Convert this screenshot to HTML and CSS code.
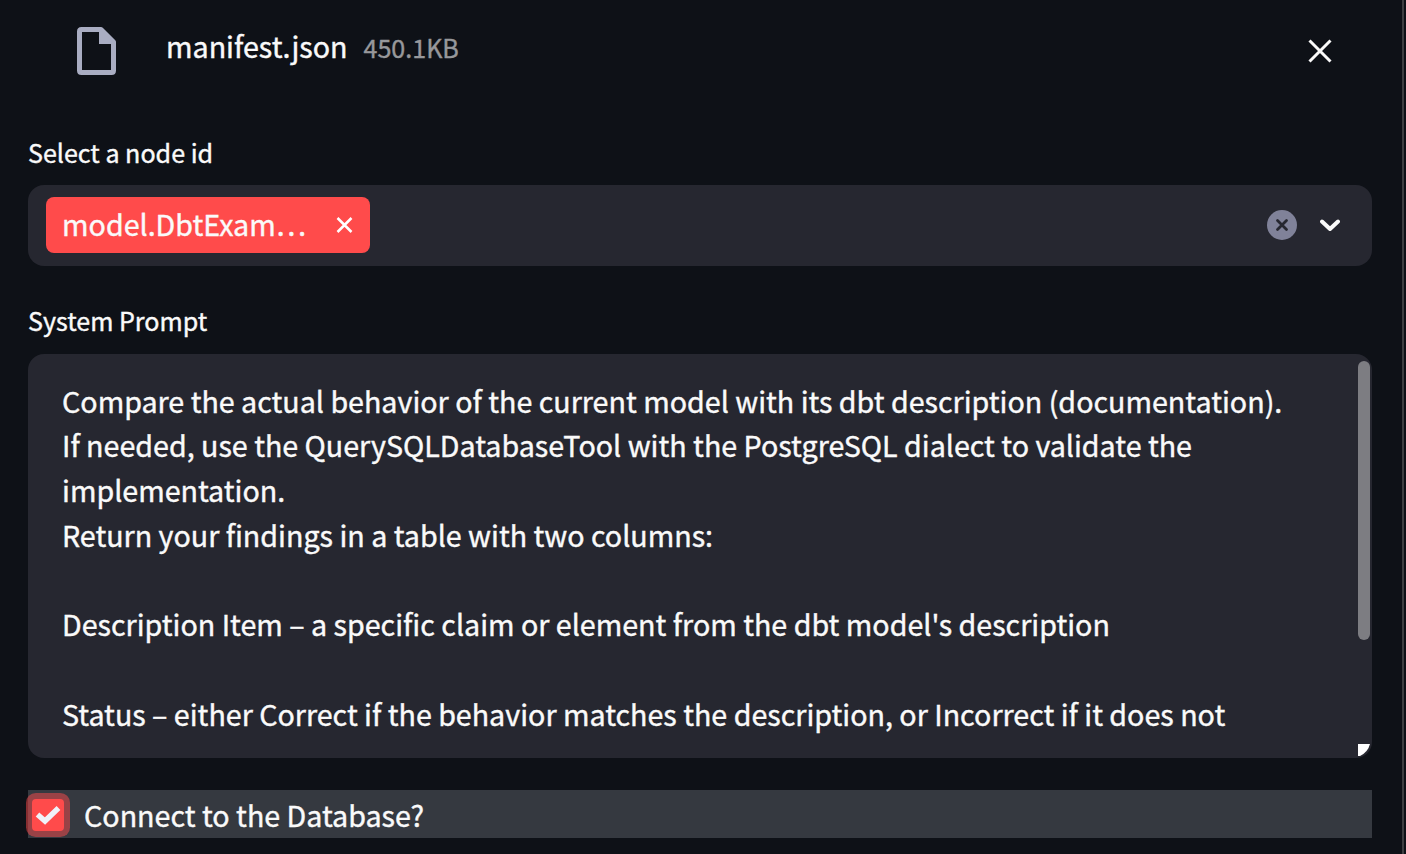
FILE: index.html
```html
<!DOCTYPE html>
<html lang="en">
<head>
  <meta charset="utf-8">
  <title>dbt model check</title>
  <link rel="stylesheet" href="styles.css">
</head>
<body>
  <div class="sidebar">
    <div class="file">
      <svg class="file-icon" width="40" height="48" viewBox="0 0 40 48">
        <path d="M4.500 2.500H24L36.500 15V43.500Q36.500 45.500 34.500 45.500H4.500Q2.500 45.500 2.500 43.500V4.500Q2.500 2.500 4.500 2.500Z" fill="none" stroke="#a9adc2" stroke-width="5" stroke-linejoin="round"/>
        <path d="M22 2L38 17H22Z" fill="#a9adc2"/>
      </svg>
      <span class="file-name">manifest.json</span>
      <span class="file-size">450.1KB</span>
      <svg class="file-remove" width="24" height="24" viewBox="0 0 24 24">
        <path d="M1.500 1.500L22.500 22.500M22.500 1.500L1.500 22.500" stroke="#fafafa" stroke-width="3"/>
      </svg>
    </div>

    <div class="label">Select a node id</div>
    <div class="select">
      <div class="tag">
        <span class="tag-text">model.DbtExam…</span>
        <svg width="18" height="18" viewBox="0 0 18 18">
          <path d="M1.500 2L15.500 16M15.500 2L1.500 16" stroke="#fff" stroke-width="2.500"/>
        </svg>
      </div>
      <svg class="clear" width="30" height="30" viewBox="0 0 30 30">
        <circle cx="15" cy="15" r="15" fill="#808299"/>
        <path d="M10.500 10.500L19.500 19.500M19.500 10.500L10.500 19.500" stroke="#262730" stroke-width="2.800" stroke-linecap="round"/>
      </svg>
      <svg class="arrow" width="20" height="13" viewBox="0 0 20 13">
        <path d="M2 2.500L10 10L18 2.500" fill="none" stroke="#fafafa" stroke-width="4" stroke-linecap="round" stroke-linejoin="round"/>
      </svg>
    </div>

    <div class="label prompt-label">System Prompt</div>
    <div class="prompt">
      <div class="prompt-text">Compare the actual behavior of the current model with its dbt description (documentation).
If needed, use the QuerySQLDatabaseTool with the PostgreSQL dialect to validate the
implementation.
Return your findings in a table with two columns:

Description Item – a specific claim or element from the dbt model's description

Status – either Correct if the behavior matches the description, or Incorrect if it does not</div>
      <div class="scrollbar"></div>
      <svg class="resizer" width="12" height="12" viewBox="0 0 12 12">
        <path d="M0 0H12Q10 8 2 12H0Z" fill="#fff"/>
      </svg>
    </div>

    <div class="checkbox">
      <span class="box">
        <svg width="26" height="20" viewBox="0 0 26 20">
          <path d="M2.500 9.500L10 16L23.500 3" fill="none" stroke="#f0f2f8" stroke-width="5.400"/>
        </svg>
      </span>
      <span class="checkbox-label">Connect to the Database?</span>
    </div>
  </div>
</body>
</html>
```
FILE: styles.css
```css
* {
  box-sizing: border-box;
}
body {
  margin: 0;
  height: 854px;
  overflow: hidden;
  background-color: #0e1117;
  color: #fafafa;
  font-family: "Noto Sans CJK SC", "Noto Sans", sans-serif;
  font-size: 28.650px;
  -webkit-text-stroke: 0.4px;
}
.sidebar {
  width: 1404px;
  height: 854px;
  padding: 0 30px 0 28px;
  border-right: 2px solid #3e3f42;
}
.file {
  display: flex;
  align-items: center;
  height: 97px;
  padding: 4px 40px 0 49px;
}
.file-name {
  margin-left: 49px;
  margin-top: -11px;
}
.file-size {
  margin-left: 16px;
  margin-top: -7px;
  font-size: 25.070px;
  color: #97989b;
}
.file-remove {
  margin-left: auto;
  margin-top: 1px;
}
.label {
  height: 56px;
  margin-top: 32px;
  font-size: 25.070px;
  line-height: 46px;
}
.prompt-label {
  line-height: 44px;
}
.select {
  display: flex;
  align-items: center;
  height: 81px;
  padding: 0 32px 1px 18px;
  border-radius: 16px;
  background-color: #262730;
}
.tag {
  display: flex;
  align-items: center;
  justify-content: space-between;
  width: 324px;
  height: 56px;
  padding: 0 16px;
  border-radius: 8px;
  background-color: #ff4b4b;
}
.tag-text {
  margin-top: -4px;
}
.clear {
  margin-left: auto;
  margin-right: 23px;
}
.prompt {
  position: relative;
  height: 404px;
  padding: 24.600px 34px;
  overflow: hidden;
  border-radius: 16px;
  background-color: #262730;
}
.prompt-text {
  line-height: 44.750px;
  white-space: pre;
}
.scrollbar {
  position: absolute;
  top: 7px;
  right: 2px;
  width: 12px;
  height: 279px;
  border-radius: 6px;
  background-color: #7d7d82;
}
.resizer {
  position: absolute;
  right: 2px;
  bottom: 2px;
}
.checkbox {
  display: flex;
  align-items: center;
  height: 48px;
  margin-top: 32px;
  background-color: #353940;
}
.box {
  display: flex;
  align-items: center;
  justify-content: center;
  width: 32px;
  height: 32px;
  margin-left: 4px;
  margin-top: 2px;
  border-radius: 4px;
  background-color: #ff4b4b;
  box-shadow: 0 0 0 6px rgba(255, 75, 75, 0.5);
}
.checkbox-label {
  margin-left: 20px;
}
```
